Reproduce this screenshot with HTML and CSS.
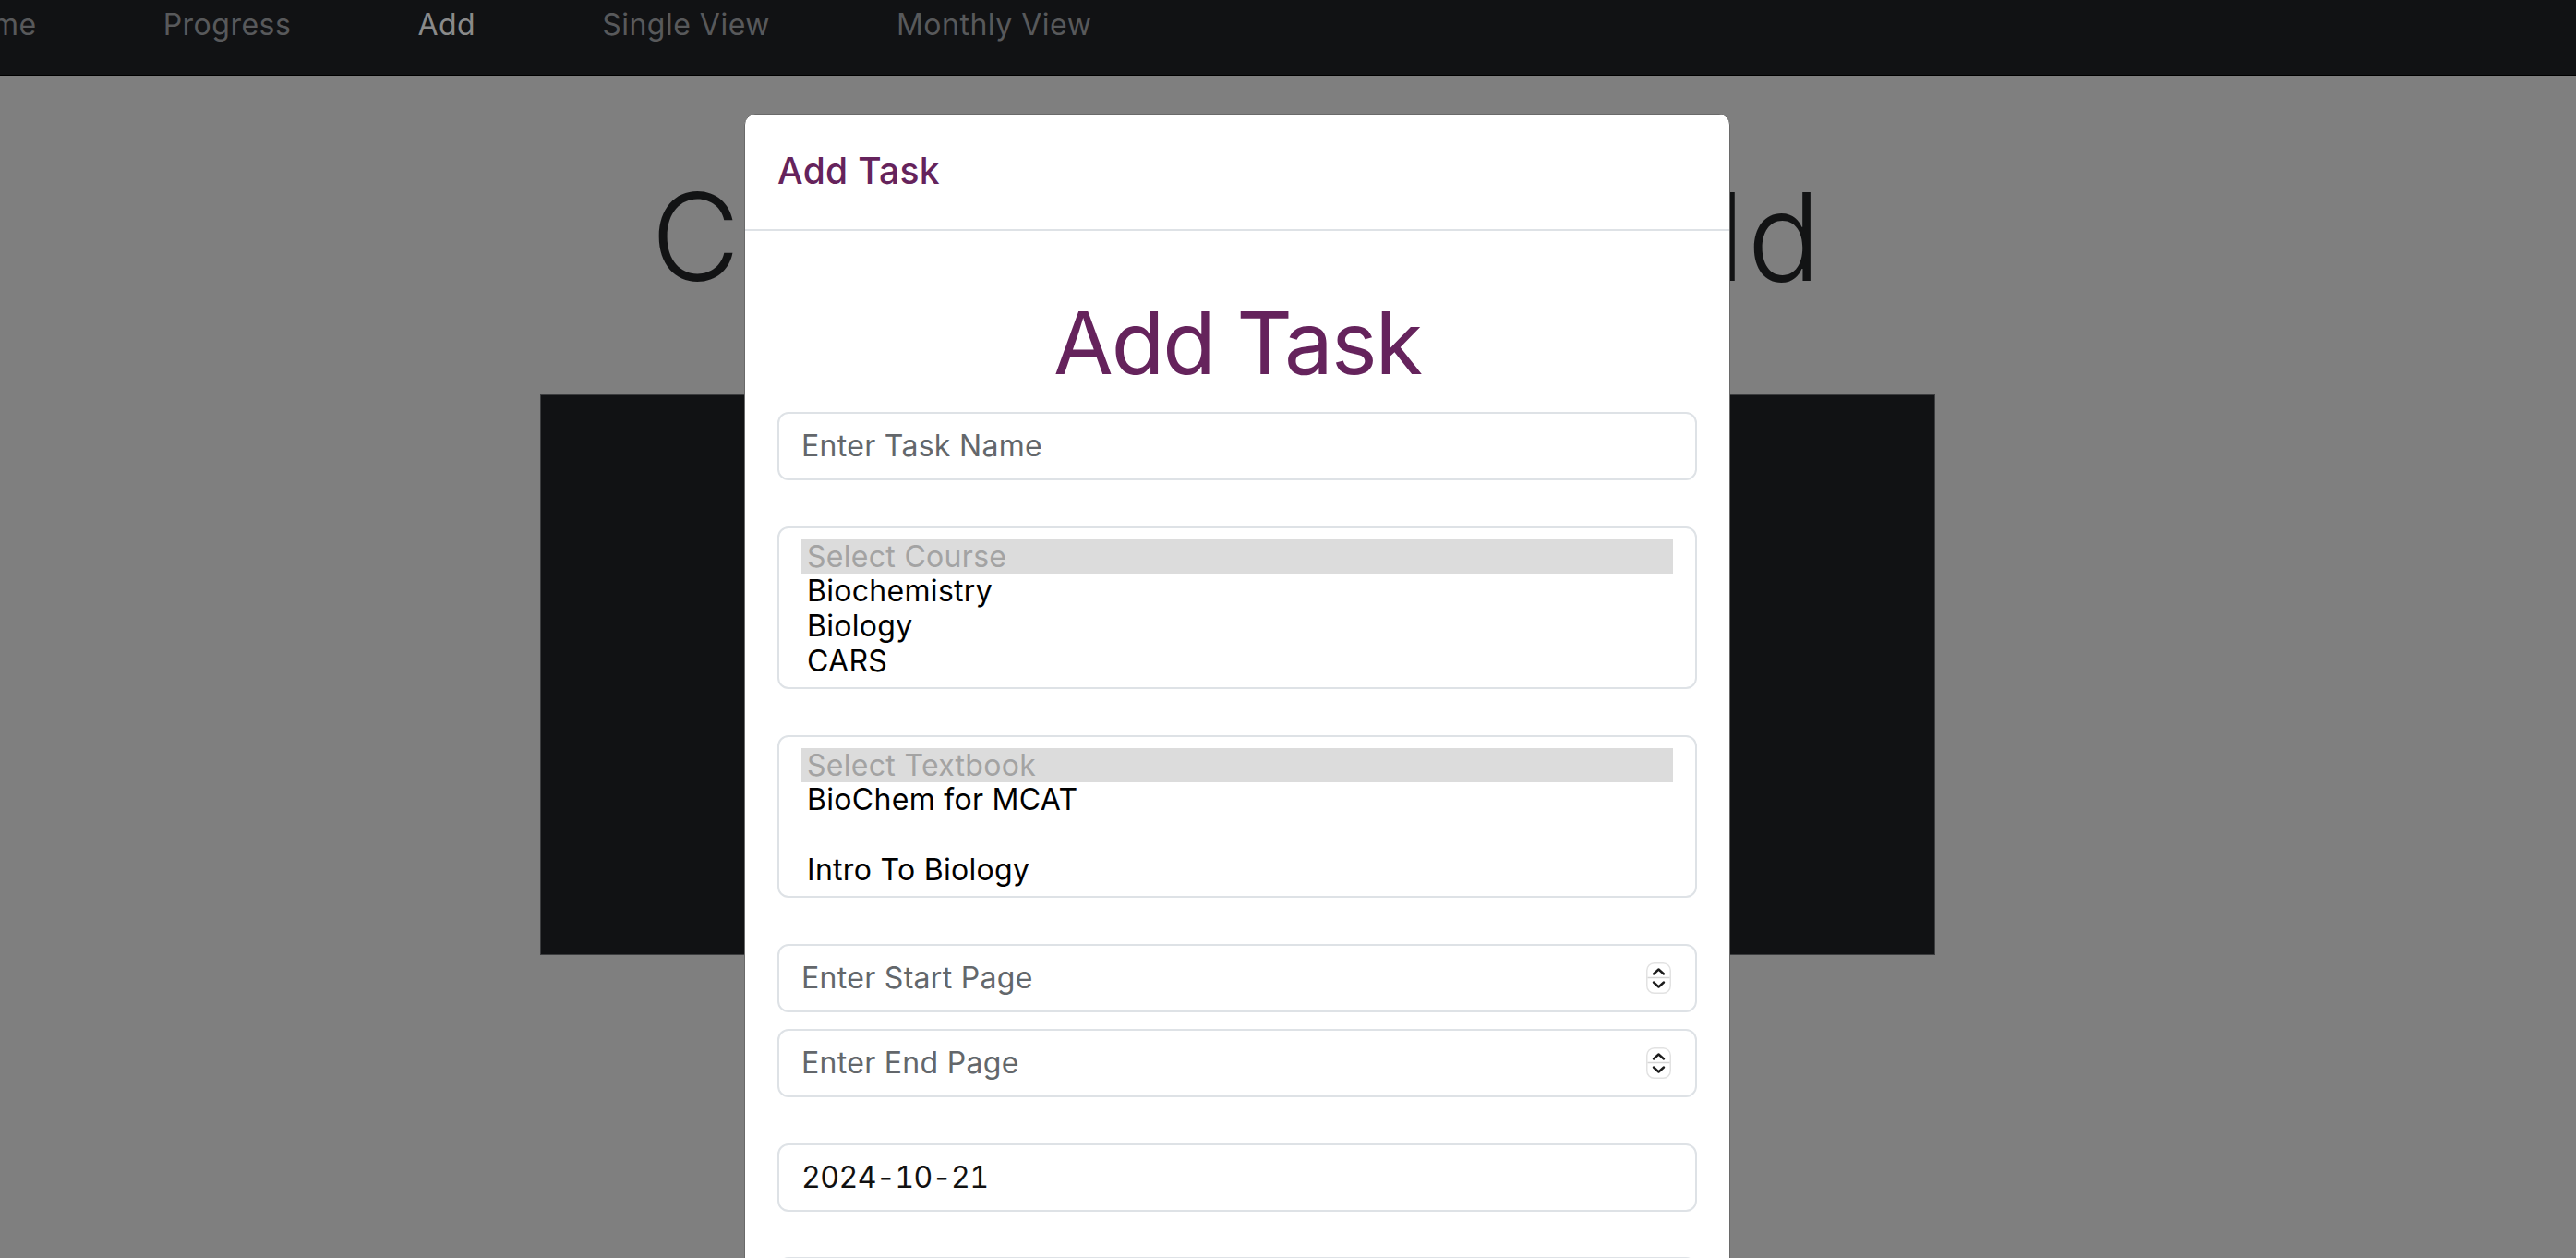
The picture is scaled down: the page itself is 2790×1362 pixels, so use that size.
FILE: index.html
```html
<!DOCTYPE html>
<html lang="en">
<head>
<meta charset="utf-8">
<title>Add Task</title>
<link rel="stylesheet" href="styles.css">
</head>
<body>
<div class="page">
  <nav class="navbar">
    <ul class="nav-list">
      <li class="nav-link">Home</li>
      <li class="nav-link">Progress</li>
      <li class="nav-link active">Add</li>
      <li class="nav-link">Single View</li>
      <li class="nav-link">Monthly View</li>
    </ul>
  </nav>
  <main class="content">
    <h1 class="hero">Calendar Task Build</h1>
    <div class="panel"></div>
  </main>
</div>

<div class="modal-layer">
  <div class="modal-dialog">
    <div class="modal-content">
      <div class="modal-header">
        <h5 class="modal-title">Add Task</h5>
      </div>
      <div class="modal-body">
        <h1 class="form-title">Add Task</h1>
        <div class="field gap-lg"><span class="placeholder-text">Enter Task Name</span></div>
        <div class="listbox gap-lg">
          <div class="opt placeholder">Select Course</div>
          <div class="opt">Biochemistry</div>
          <div class="opt">Biology</div>
          <div class="opt">CARS</div>
        </div>
        <div class="listbox gap-lg">
          <div class="opt placeholder">Select Textbook</div>
          <div class="opt">BioChem for MCAT</div>
          <div class="opt"> </div>
          <div class="opt">Intro To Biology</div>
        </div>
        <div class="field gap-sm">
          <span class="placeholder-text">Enter Start Page</span>
          <svg class="spinner" width="27" height="34" viewBox="0 0 27 34">
            <rect x="0.75" y="0.75" width="25.5" height="32.5" rx="8" fill="#fff" stroke="#e2e2e2" stroke-width="1.5"/>
            <line x1="1.5" y1="16.5" x2="25.5" y2="16.5" stroke="#d6d6d6" stroke-width="1.5"/>
            <path d="M8 12.5 L13.5 7.5 L19 12.5" fill="none" stroke="#1c1c1c" stroke-width="2.4" stroke-linecap="round" stroke-linejoin="round"/>
            <path d="M8 21.5 L13.5 26.5 L19 21.5" fill="none" stroke="#1c1c1c" stroke-width="2.4" stroke-linecap="round" stroke-linejoin="round"/>
          </svg>
        </div>
        <div class="field gap-lg">
          <span class="placeholder-text">Enter End Page</span>
          <svg class="spinner" width="27" height="34" viewBox="0 0 27 34">
            <rect x="0.75" y="0.75" width="25.5" height="32.5" rx="8" fill="#fff" stroke="#e2e2e2" stroke-width="1.5"/>
            <line x1="1.5" y1="16.5" x2="25.5" y2="16.5" stroke="#d6d6d6" stroke-width="1.5"/>
            <path d="M8 12.5 L13.5 7.5 L19 12.5" fill="none" stroke="#1c1c1c" stroke-width="2.4" stroke-linecap="round" stroke-linejoin="round"/>
            <path d="M8 21.5 L13.5 26.5 L19 21.5" fill="none" stroke="#1c1c1c" stroke-width="2.4" stroke-linecap="round" stroke-linejoin="round"/>
          </svg>
        </div>
        <div class="field gap-date"><span class="value-text">2024-10-21</span></div>
        <div class="field"></div>
      </div>
    </div>
  </div>
</div>
</body>
</html>
```

FILE: styles.css
```css
* {
  box-sizing: border-box;
}

html,
body {
  margin: 0;
  padding: 0;
}

body {
  width: 2790px;
  height: 1362px;
  overflow: hidden;
  background: #7f7f7f;
  font-family: Inter, "Liberation Sans", sans-serif;
}

.page {
  width: 100%;
}

.navbar {
  height: 82px;
  background: #111214;
  border-bottom: 1px solid #000;
  overflow: hidden;
}

.nav-list {
  display: flex;
  gap: 137px;
  margin: 0 0 0 -52px;
  padding: 8px 0 0;
  list-style: none;
}

.nav-link {
  font-size: 32px;
  line-height: 38px;
  letter-spacing: 0.5px;
  color: #58595b;
  white-space: nowrap;
}

.nav-link.active {
  color: #8a8a8a;
}

.content {
  width: 2680px;
  display: flex;
  flex-direction: column;
  align-items: center;
  padding-top: 95px;
}

.hero {
  margin: 0;
  font-size: 132px;
  font-weight: 300;
  line-height: 1.2;
  letter-spacing: 2.8px;
  color: #121314;
  white-space: nowrap;
}

.panel {
  width: 1511px;
  height: 607px;
  margin-top: 92px;
  background: #111214;
  border: 1px solid #3c3d3f;
}

.modal-layer {
  position: fixed;
  top: 0;
  left: 0;
  width: 2680px;
  height: 1362px;
  overflow: hidden;
}

.modal-dialog {
  width: 1068px;
  margin: 123px auto 0;
}

.modal-content {
  background: #fff;
  border: 1px solid #6a6a6a;
  border-radius: 12px;
}

.modal-header {
  padding: 38px 35px 39px;
  border-bottom: 2px solid #dee2e6;
}

.modal-title {
  margin: 0;
  font-size: 39px;
  font-weight: 500;
  line-height: 1.2;
  letter-spacing: 0.3px;
  color: #65235c;
}

.modal-body {
  padding: 65px 35px 40px;
}

.form-title {
  margin: 0 0 18px;
  text-align: center;
  font-size: 94px;
  font-weight: 400;
  line-height: 1.2;
  letter-spacing: -2px;
  color: #65235c;
}

.field {
  height: 74px;
  border: 2px solid #dee2e6;
  border-radius: 12px;
  display: flex;
  align-items: center;
  padding: 0 26px 0 24px;
  font-size: 32px;
  letter-spacing: 0.3px;
}

.placeholder-text {
  color: #63676b;
}

.value-text {
  color: #111;
  font-variant-numeric: tabular-nums;
  letter-spacing: -0.5px;
}

.spinner {
  margin-left: auto;
  flex: none;
}

.gap-lg {
  margin-bottom: 50px;
}

.gap-sm {
  margin-bottom: 18px;
}

.gap-date {
  margin-bottom: 49px;
}

.listbox {
  height: 176px;
  border: 2px solid #dee2e6;
  border-radius: 12px;
  padding: 12px 24px 9px;
}

.opt {
  height: 37.75px;
  line-height: 37.75px;
  padding-left: 6px;
  font-size: 32px;
  letter-spacing: 0.3px;
  color: #000;
  white-space: pre;
}

.opt.placeholder {
  background: #dcdcdc;
  color: #a3a3a3;
}
```
